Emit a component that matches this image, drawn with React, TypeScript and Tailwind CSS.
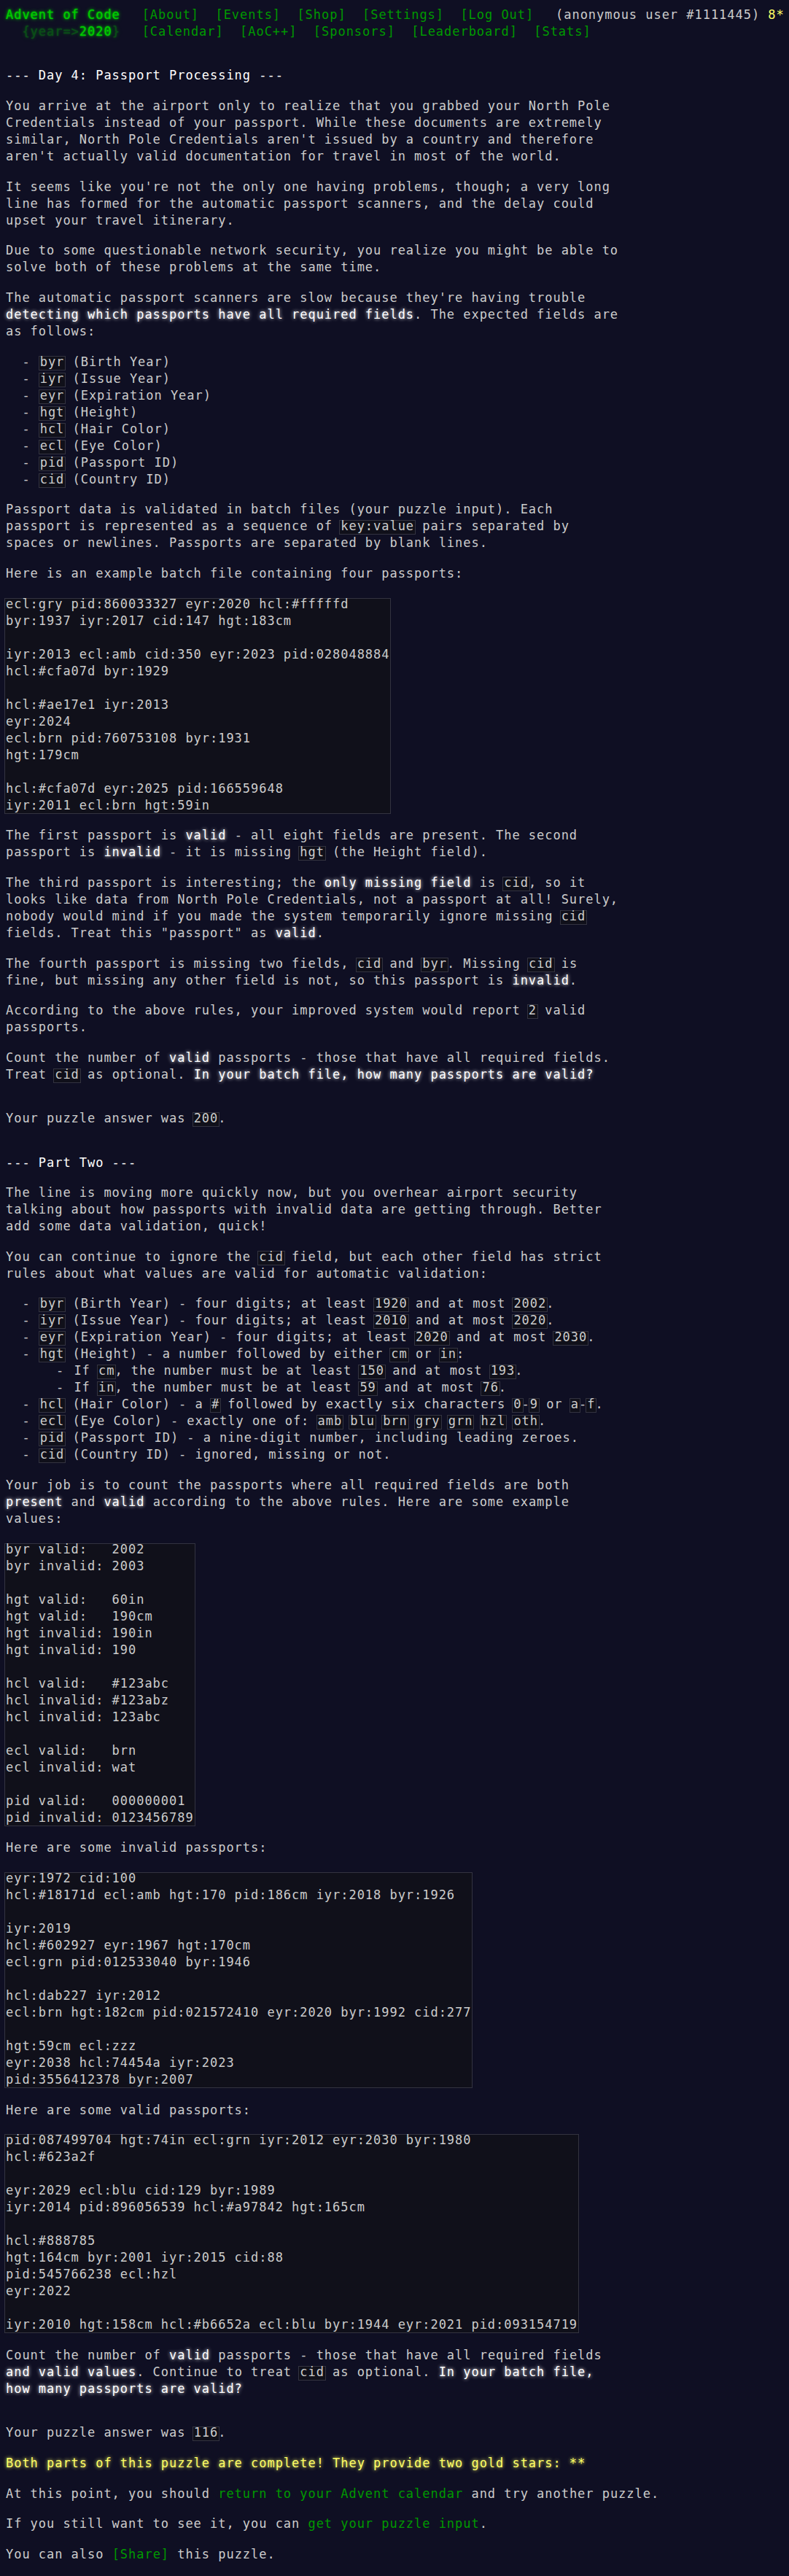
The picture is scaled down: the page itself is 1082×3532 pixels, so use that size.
import React from "react";

function C({ children }: { children: React.ReactNode }) {
  return (
    <code className="relative z-0 inline-block font-['DejaVu_Sans_Mono',monospace] text-[1em] before:content-[''] before:absolute before:-left-[2px] before:-right-[2px] before:top-[3px] before:bottom-0 before:border before:border-[#333340] before:bg-[#10101a] before:-z-10">
      {children}
    </code>
  );
}

function E({ children }: { children: React.ReactNode }) {
  return <em className="not-italic text-white [text-shadow:0_0_5px_#ffffff]">{children}</em>;
}

function P({ children }: { children: React.ReactNode }) {
  return <p className="my-[18.67px]">{children}</p>;
}

function Li({ children }: { children: React.ReactNode }) {
  return (
    <li className="flex">
      <span className="w-[46.7px] shrink-0 whitespace-pre">{"  -"}</span>
      <div className="min-w-0">{children}</div>
    </li>
  );
}

function Pre({ text }: { text: string }) {
  return (
    <pre className="my-[18.67px] font-['DejaVu_Sans_Mono',monospace] text-[1em]">
      <C>{text}</C>
    </pre>
  );
}

function A({ children }: { children: React.ReactNode }) {
  return <a className="text-[#009900]">{children}</a>;
}

const nav1 = ["[About]", "[Events]", "[Shop]", "[Settings]", "[Log Out]"];
const nav2 = ["[Calendar]", "[AoC++]", "[Sponsors]", "[Leaderboard]", "[Stats]"];

const ex1 = `ecl:gry pid:860033327 eyr:2020 hcl:#fffffd
byr:1937 iyr:2017 cid:147 hgt:183cm

iyr:2013 ecl:amb cid:350 eyr:2023 pid:028048884
hcl:#cfa07d byr:1929

hcl:#ae17e1 iyr:2013
eyr:2024
ecl:brn pid:760753108 byr:1931
hgt:179cm

hcl:#cfa07d eyr:2025 pid:166559648
iyr:2011 ecl:brn hgt:59in`;

const ex2 = `byr valid:   2002
byr invalid: 2003

hgt valid:   60in
hgt valid:   190cm
hgt invalid: 190in
hgt invalid: 190

hcl valid:   #123abc
hcl invalid: #123abz
hcl invalid: 123abc

ecl valid:   brn
ecl invalid: wat

pid valid:   000000001
pid invalid: 0123456789`;

const ex3 = `eyr:1972 cid:100
hcl:#18171d ecl:amb hgt:170 pid:186cm iyr:2018 byr:1926

iyr:2019
hcl:#602927 eyr:1967 hgt:170cm
ecl:grn pid:012533040 byr:1946

hcl:dab227 iyr:2012
ecl:brn hgt:182cm pid:021572410 eyr:2020 byr:1992 cid:277

hgt:59cm ecl:zzz
eyr:2038 hcl:74454a iyr:2023
pid:3556412378 byr:2007`;

const ex4 = `pid:087499704 hgt:74in ecl:grn iyr:2012 eyr:2030 byr:1980
hcl:#623a2f

eyr:2029 ecl:blu cid:129 byr:1989
iyr:2014 pid:896056539 hcl:#a97842 hgt:165cm

hcl:#888785
hgt:164cm byr:2001 iyr:2015 cid:88
pid:545766238 ecl:hzl
eyr:2022

iyr:2010 hgt:158cm hcl:#b6652a ecl:blu byr:1944 eyr:2021 pid:093154719`;

export default function App() {
  return (
    <div className="isolate min-h-screen overflow-x-hidden bg-[#0f0f23] text-[#cccccc] font-['DejaVu_Sans_Mono',monospace] text-[17px] tracking-[0.966px] leading-[23px] px-2 pt-[9px] pb-2">
      <header className="whitespace-nowrap mb-[37.33px]">
        <div>
          <h1 className="inline-block pr-[18.67px]">
            <a className="inline-block text-[#00cc00] [text-shadow:0_0_2px_#00cc00,0_0_5px_#00cc00]">Advent of Code</a>
          </h1>
          <nav className="inline-block">
            <ul className="inline-block">
              {nav1.map((n) => (
                <li key={n} className="inline-block px-[11.2px]">
                  <A>{n}</A>
                </li>
              ))}
            </ul>
          </nav>
          <div className="inline-block pl-[18.67px]">
            (anonymous user #1111445){" "}
            <span className="text-[#ffff66]">8*</span>
          </div>
        </div>
        <div>
          <h1 className="inline-block pr-[18.67px] text-[#00cc00] [text-shadow:0_0_2px_#00cc00,0_0_5px_#00cc00]">
            <span className="whitespace-pre">{"  "}</span>
            <span className="opacity-[0.33]">{"{year=>"}</span>
            <a>2020</a>
            <span className="opacity-[0.33]">{"}"}</span>
          </h1>
          <nav className="inline-block">
            <ul className="inline-block">
              {nav2.map((n) => (
                <li key={n} className="inline-block px-[11.2px]">
                  <A>{n}</A>
                </li>
              ))}
            </ul>
          </nav>
        </div>
      </header>

      <main>
        <article className="w-[842px] my-[37.33px]">
          <h2 className="text-white my-[18.67px] whitespace-nowrap">--- Day 4: Passport Processing ---</h2>
          <P>
            You arrive at the airport only to realize that you grabbed your North Pole Credentials instead of your passport. While these documents are extremely similar, North Pole Credentials aren't issued by a country and therefore aren't actually valid documentation for travel in most of the world.
          </P>
          <P>
            It seems like you're not the only one having problems, though; a very long line has formed for the automatic passport scanners, and the delay could upset your travel itinerary.
          </P>
          <P>
            Due to some questionable network security, you realize you might be able to solve both of these problems at the same time.
          </P>
          <P>
            The automatic passport scanners are slow because they're having trouble <E>detecting which passports have all required fields</E>. The expected fields are as follows:
          </P>
          <ul className="my-[18.67px]">
            <Li><C>byr</C> (Birth Year)</Li>
            <Li><C>iyr</C> (Issue Year)</Li>
            <Li><C>eyr</C> (Expiration Year)</Li>
            <Li><C>hgt</C> (Height)</Li>
            <Li><C>hcl</C> (Hair Color)</Li>
            <Li><C>ecl</C> (Eye Color)</Li>
            <Li><C>pid</C> (Passport ID)</Li>
            <Li><C>cid</C> (Country ID)</Li>
          </ul>
          <P>
            Passport data is validated in batch files (your puzzle input). Each passport is represented as a sequence of <C>key:value</C> pairs separated by spaces or newlines. Passports are separated by blank lines.
          </P>
          <P>Here is an example batch file containing four passports:</P>
          <Pre text={ex1} />
          <P>
            The first passport is <E>valid</E> - all eight fields are present. The second passport is <E>invalid</E> - it is missing <C>hgt</C> (the Height field).
          </P>
          <P>
            The third passport is interesting; the <E>only missing field</E> is <C>cid</C>, so it looks like data from North Pole Credentials, not a passport at all! Surely, nobody would mind if you made the system temporarily ignore missing <C>cid</C> fields. Treat this "passport" as <E>valid</E>.
          </P>
          <P>
            The fourth passport is missing two fields, <C>cid</C> and <C>byr</C>. Missing <C>cid</C> is fine, but missing any other field is not, so this passport is <E>invalid</E>.
          </P>
          <P>
            According to the above rules, your improved system would report <C>2</C> valid passports.
          </P>
          <P>
            Count the number of <E>valid</E> passports - those that have all required fields. Treat <C>cid</C> as optional. <E>In your batch file, how many passports are valid?</E>
          </P>
        </article>

        <P>
          Your puzzle answer was <C>200</C>.
        </P>

        <article className="w-[842px] my-[37.33px]">
          <h2 className="text-white my-[18.67px] whitespace-nowrap">--- Part Two ---</h2>
          <P>
            The line is moving more quickly now, but you overhear airport security talking about how passports with invalid data are getting through. Better add some data validation, quick!
          </P>
          <P>
            You can continue to ignore the <C>cid</C> field, but each other field has strict rules about what values are valid for automatic validation:
          </P>
          <ul className="my-[18.67px]">
            <Li><C>byr</C> (Birth Year) - four digits; at least <C>1920</C> and at most <C>2002</C>.</Li>
            <Li><C>iyr</C> (Issue Year) - four digits; at least <C>2010</C> and at most <C>2020</C>.</Li>
            <Li><C>eyr</C> (Expiration Year) - four digits; at least <C>2020</C> and at most <C>2030</C>.</Li>
            <Li>
              <C>hgt</C> (Height) - a number followed by either <C>cm</C> or <C>in</C>:
              <ul>
                <Li>If <C>cm</C>, the number must be at least <C>150</C> and at most <C>193</C>.</Li>
                <Li>If <C>in</C>, the number must be at least <C>59</C> and at most <C>76</C>.</Li>
              </ul>
            </Li>
            <Li><C>hcl</C> (Hair Color) - a <C>#</C> followed by exactly six characters <C>0</C>-<C>9</C> or <C>a</C>-<C>f</C>.</Li>
            <Li><C>ecl</C> (Eye Color) - exactly one of: <C>amb</C> <C>blu</C> <C>brn</C> <C>gry</C> <C>grn</C> <C>hzl</C> <C>oth</C>.</Li>
            <Li><C>pid</C> (Passport ID) - a nine-digit number, including leading zeroes.</Li>
            <Li><C>cid</C> (Country ID) - ignored, missing or not.</Li>
          </ul>
          <P>
            Your job is to count the passports where all required fields are both <E>present</E> and <E>valid</E> according to the above rules. Here are some example values:
          </P>
          <Pre text={ex2} />
          <P>Here are some invalid passports:</P>
          <Pre text={ex3} />
          <P>Here are some valid passports:</P>
          <Pre text={ex4} />
          <P>
            Count the number of <E>valid</E> passports - those that have all required fields <E>and valid values</E>. Continue to treat <C>cid</C> as optional. <E>In your batch file, how many passports are valid?</E>
          </P>
        </article>

        <P>
          Your puzzle answer was <C>116</C>.
        </P>
        <p className="my-[18.67px] text-[#ffff66] [text-shadow:0_0_5px_#ffff66]">
          Both parts of this puzzle are complete! They provide two gold stars: <span className="text-[#ffff66]">**</span>
        </p>
        <P>
          At this point, you should <A>return to your Advent calendar</A> and try another puzzle.
        </P>
        <P>
          If you still want to see it, you can <A>get your puzzle input</A>.
        </P>
        <P>
          You can also <span className="text-[#009900]">[Share]</span> this puzzle.
        </P>
      </main>
    </div>
  );
}
